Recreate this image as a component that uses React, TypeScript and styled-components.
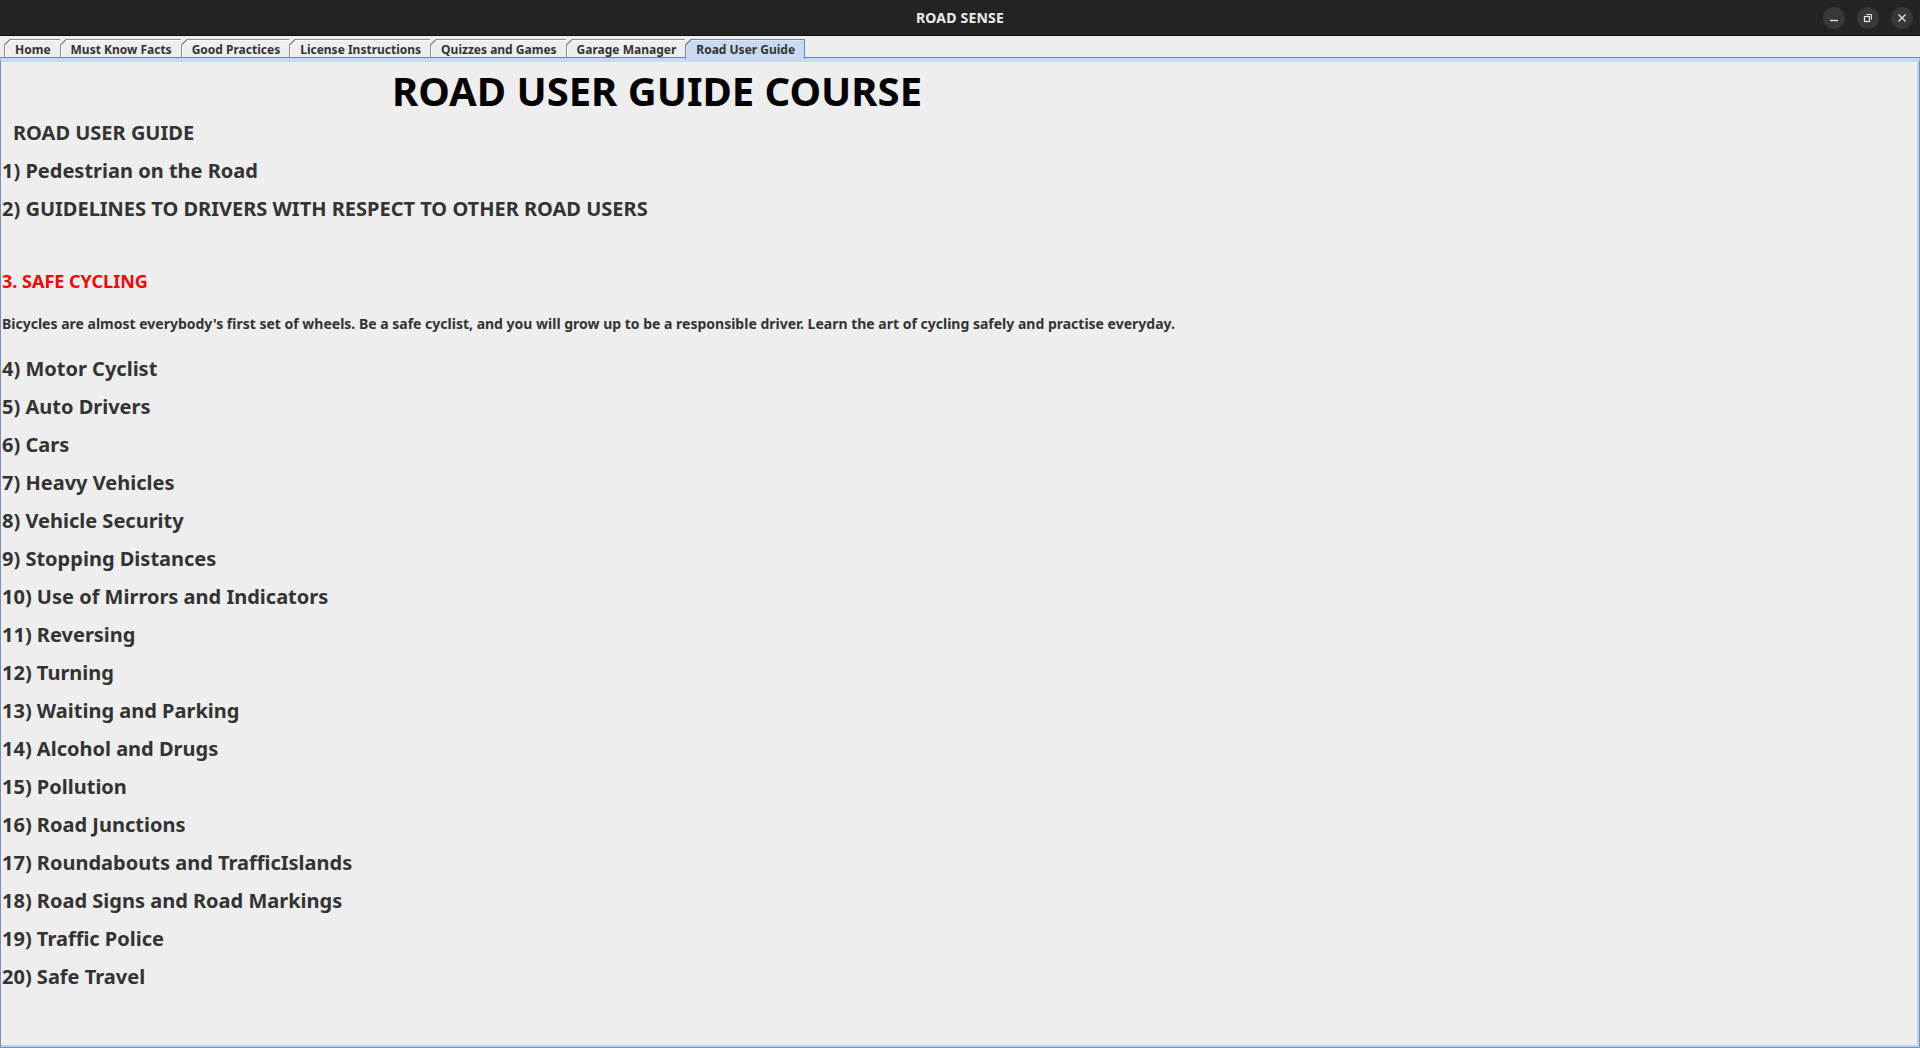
import React from "react";
import styled, { createGlobalStyle } from "styled-components";

const tabs = [
  "Home",
  "Must Know Facts",
  "Good Practices",
  "License Instructions",
  "Quizzes and Games",
  "Garage Manager",
  "Road User Guide",
];

const topics = [
  "4) Motor Cyclist",
  "5) Auto Drivers",
  "6) Cars",
  "7) Heavy Vehicles",
  "8) Vehicle Security",
  "9) Stopping Distances",
  "10) Use of Mirrors and Indicators",
  "11) Reversing",
  "12) Turning",
  "13) Waiting and Parking",
  "14) Alcohol and Drugs",
  "15) Pollution",
  "16) Road Junctions",
  "17) Roundabouts and TrafficIslands",
  "18) Road Signs and Road Markings",
  "19) Traffic Police",
  "20) Safe Travel",
];

const GlobalStyle = createGlobalStyle`
  html, body {
    margin: 0;
    padding: 0;
    background: #eeeeee;
    font-family: "Noto Sans", "Open Sans", sans-serif;
  }
  * {
    box-sizing: border-box;
  }
`;

const Window = styled.div`
  display: flex;
  flex-direction: column;
  width: 1920px;
  height: 1048px;
  overflow: hidden;
`;

const TitleBar = styled.div`
  position: relative;
  height: 36px;
  flex-shrink: 0;
  background: #232323;
  border-bottom: 1px solid #111111;
  display: flex;
  align-items: center;
  justify-content: center;
`;

const Title = styled.span`
  color: #ececec;
  font-size: 14px;
  font-weight: 700;
  letter-spacing: 0.2px;
`;

const Controls = styled.div`
  position: absolute;
  right: 7px;
  top: 7px;
  display: flex;
  gap: 12px;
`;

const ControlButton = styled.div`
  width: 22px;
  height: 22px;
  border-radius: 50%;
  background: #383838;
  display: flex;
  align-items: center;
  justify-content: center;
`;

const TabStrip = styled.div`
  height: 22px;
  flex-shrink: 0;
  display: flex;
  align-items: flex-end;
  padding-left: 4px;
`;

const Tab = styled.div<{ $active?: boolean }>`
  position: relative;
  height: ${(p) => (p.$active ? "20px" : "19px")};
  padding: 0 9px 0 10px;
  margin-right: ${(p) => (p.$active ? "0" : "-1px")};
  display: flex;
  align-items: center;
  font-size: 12px;
  font-weight: 700;
  color: #333333;
  background: ${(p) => (p.$active ? "#c8daf0" : "#eeeeee")};
  border: 1px solid ${(p) => (p.$active ? "#6a86b8" : "#8e8e8e")};
  border-bottom: none;
  box-shadow: inset 1px 1px 0 ${(p) => (p.$active ? "#dce8f6" : "#ffffff")};
  margin-bottom: ${(p) => (p.$active ? "-1px" : "0")};
  z-index: ${(p) => (p.$active ? 2 : 1)};

  &::before {
    content: "";
    position: absolute;
    left: -1px;
    top: -1px;
    width: 6px;
    height: 6px;
    background: linear-gradient(
      135deg,
      #eeeeee 0 48%,
      ${(p) => (p.$active ? "#6a86b8" : "#8e8e8e")} 48% 62%,
      transparent 62%
    );
  }
`;

const Panel = styled.div`
  flex: 1;
  border: 1px solid #7a8fb4;
  border-top: 4px solid #c8daf0;
  box-shadow: inset -2px -2px 0 #bcd0ea, 0 -1px 0 #6a86b8;
  padding-top: 6px;
  position: relative;
  z-index: 1;
`;

const CourseTitle = styled.h1`
  margin: 0;
  padding-left: 391px;
  font-size: 40px;
  line-height: 46px;
  font-weight: 700;
  color: #000000;
`;

const Line = styled.div<{ $size?: number; $indent?: number; $color?: string; $gap?: number }>`
  padding-left: ${(p) => p.$indent ?? 1}px;
  margin-top: ${(p) => p.$gap ?? 0}px;
  font-size: ${(p) => p.$size ?? 20}px;
  line-height: 38px;
  font-weight: 700;
  color: ${(p) => p.$color ?? "#333333"};
  white-space: nowrap;
`;

const Icon = styled.svg`
  display: block;
`;

export default function App() {
  return (
    <Window>
      <GlobalStyle />
      <TitleBar>
        <Title>ROAD SENSE</Title>
        <Controls>
          <ControlButton>
            <Icon width="10" height="10" viewBox="0 0 10 10">
              <path d="M1 7.5h8" stroke="#e6e6e6" strokeWidth="1.3" />
            </Icon>
          </ControlButton>
          <ControlButton>
            <Icon width="10" height="10" viewBox="0 0 10 10">
              <rect x="1.5" y="3.5" width="5" height="5" fill="none" stroke="#e6e6e6" strokeWidth="1.2" />
              <path d="M3.5 1.5h5v5" fill="none" stroke="#e6e6e6" strokeWidth="1" />
            </Icon>
          </ControlButton>
          <ControlButton>
            <Icon width="10" height="10" viewBox="0 0 10 10">
              <path d="M1.5 1.5l7 7M8.5 1.5l-7 7" stroke="#e6e6e6" strokeWidth="1.3" />
            </Icon>
          </ControlButton>
        </Controls>
      </TitleBar>
      <TabStrip>
        {tabs.map((t) => (
          <Tab key={t} $active={t === "Road User Guide"}>
            {t}
          </Tab>
        ))}
      </TabStrip>
      <Panel>
        <CourseTitle>ROAD USER GUIDE COURSE</CourseTitle>
        <Line $indent={12}>ROAD USER GUIDE</Line>
        <Line>1) Pedestrian on the Road</Line>
        <Line>2) GUIDELINES TO DRIVERS WITH RESPECT TO OTHER ROAD USERS</Line>
        <Line $size={18} $color="#ff0000" $gap={34}>
          3. SAFE CYCLING
        </Line>
        <Line $size={14} $gap={5}>
          Bicycles are almost everybody's first set of wheels. Be a safe cyclist, and you will grow up to be a
          responsible driver. Learn the art of cycling safely and practise everyday.
        </Line>
        <Line $gap={7}>{topics[0]}</Line>
        {topics.slice(1).map((t) => (
          <Line key={t}>{t}</Line>
        ))}
      </Panel>
    </Window>
  );
}
